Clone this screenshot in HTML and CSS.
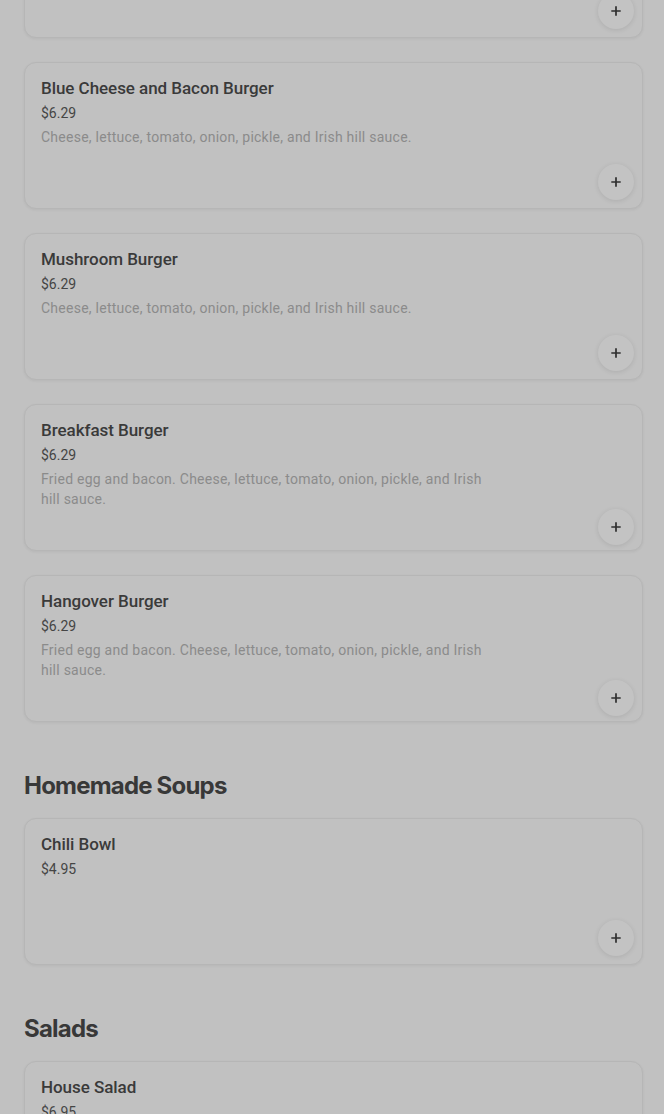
FILE: index.html
```html
<!DOCTYPE html>
<html lang="en">
<head>
<meta charset="utf-8">
<title>Menu</title>
<link rel="stylesheet" href="styles.css">
</head>
<body>
<main class="menu">
  <section class="section">
    <article class="item">
      <div class="info">
        <h3 class="name">Irish Hill Burger</h3>
        <p class="price">$5.99</p>
        <p class="desc">Cheese, lettuce, tomato, onion, pickle, and Irish hill sauce.</p>
      </div>
      <div class="actions"><button class="add" aria-label="Add"><svg viewBox="0 0 14 14" width="14" height="14"><path d="M7 1.5v11M1.5 7h11" stroke="currentColor" stroke-width="2" fill="none"/></svg></button></div>
    </article>
    <article class="item">
      <div class="info">
        <h3 class="name">Blue Cheese and Bacon Burger</h3>
        <p class="price">$6.29</p>
        <p class="desc">Cheese, lettuce, tomato, onion, pickle, and Irish hill sauce.</p>
      </div>
      <div class="actions"><button class="add" aria-label="Add"><svg viewBox="0 0 14 14" width="14" height="14"><path d="M7 1.5v11M1.5 7h11" stroke="currentColor" stroke-width="2" fill="none"/></svg></button></div>
    </article>
    <article class="item">
      <div class="info">
        <h3 class="name">Mushroom Burger</h3>
        <p class="price">$6.29</p>
        <p class="desc">Cheese, lettuce, tomato, onion, pickle, and Irish hill sauce.</p>
      </div>
      <div class="actions"><button class="add" aria-label="Add"><svg viewBox="0 0 14 14" width="14" height="14"><path d="M7 1.5v11M1.5 7h11" stroke="currentColor" stroke-width="2" fill="none"/></svg></button></div>
    </article>
    <article class="item">
      <div class="info">
        <h3 class="name">Breakfast Burger</h3>
        <p class="price">$6.29</p>
        <p class="desc">Fried egg and bacon. Cheese, lettuce, tomato, onion, pickle, and Irish hill sauce.</p>
      </div>
      <div class="actions"><button class="add" aria-label="Add"><svg viewBox="0 0 14 14" width="14" height="14"><path d="M7 1.5v11M1.5 7h11" stroke="currentColor" stroke-width="2" fill="none"/></svg></button></div>
    </article>
    <article class="item">
      <div class="info">
        <h3 class="name">Hangover Burger</h3>
        <p class="price">$6.29</p>
        <p class="desc">Fried egg and bacon. Cheese, lettuce, tomato, onion, pickle, and Irish hill sauce.</p>
      </div>
      <div class="actions"><button class="add" aria-label="Add"><svg viewBox="0 0 14 14" width="14" height="14"><path d="M7 1.5v11M1.5 7h11" stroke="currentColor" stroke-width="2" fill="none"/></svg></button></div>
    </article>
  </section>

  <section class="section">
    <h2 class="heading">Homemade Soups</h2>
    <article class="item">
      <div class="info">
        <h3 class="name">Chili Bowl</h3>
        <p class="price">$4.95</p>
      </div>
      <div class="actions"><button class="add" aria-label="Add"><svg viewBox="0 0 14 14" width="14" height="14"><path d="M7 1.5v11M1.5 7h11" stroke="currentColor" stroke-width="2" fill="none"/></svg></button></div>
    </article>
  </section>

  <section class="section">
    <h2 class="heading">Salads</h2>
    <article class="item">
      <div class="info">
        <h3 class="name">House Salad</h3>
        <p class="price">$6.95</p>
        <p class="desc">Mixed greens, tomato, cucumber, onion, and croutons.</p>
      </div>
      <div class="actions"><button class="add" aria-label="Add"><svg viewBox="0 0 14 14" width="14" height="14"><path d="M7 1.5v11M1.5 7h11" stroke="currentColor" stroke-width="2" fill="none"/></svg></button></div>
    </article>
  </section>
</main>
</body>
</html>
```

FILE: styles.css
```css
* { box-sizing: border-box; }
html, body {
  margin: 0;
  padding: 0;
  background: #c1c1c1;
  font-family: Roboto, "Liberation Sans", sans-serif;
  overflow: hidden;
}
.menu {
  margin: -109px 21px 0 24px;
  display: flex;
  flex-direction: column;
}
.section {
  display: flex;
  flex-direction: column;
  gap: 24px;
}
.section + .section {
  margin-top: 48px;
}
.heading {
  margin: 0 0 -8px;
  font-family: Inter, "Liberation Sans", sans-serif;
  font-size: 24px;
  line-height: 32px;
  font-weight: 700;
  letter-spacing: -0.8px;
  color: #383838;
}
.item {
  height: 147px;
  border: 1px solid #b6b6b6;
  border-radius: 12px;
  background: #c1c1c1;
  box-shadow: 0 1px 3px rgba(0,0,0,0.06);
  padding: 13px 8px 8px 16px;
  display: flex;
  flex-direction: column;
}
.info {
  max-width: 450px;
}
.name {
  margin: 0;
  font-size: 17px;
  line-height: 24px;
  font-weight: 500;
  color: #3a3a3a;
  letter-spacing: -0.05px;
}
.price {
  margin: 3px 0 0;
  font-size: 14px;
  line-height: 20px;
  color: #454545;
}
.desc {
  margin: 4px 0 0;
  font-size: 14px;
  line-height: 20px;
  color: #8b8b8b;
  letter-spacing: 0.25px;
}
.actions {
  margin-top: auto;
  display: flex;
  justify-content: flex-end;
}
.add {
  width: 36px;
  height: 36px;
  border-radius: 50%;
  border: none;
  background: #c3c3c3;
  box-shadow: 0 1px 5px rgba(0,0,0,0.1);
  color: #2f2f2f;
  display: flex;
  align-items: center;
  justify-content: center;
  padding: 0;
}
.add svg { display: block; width: 12px; height: 12px; }
```
